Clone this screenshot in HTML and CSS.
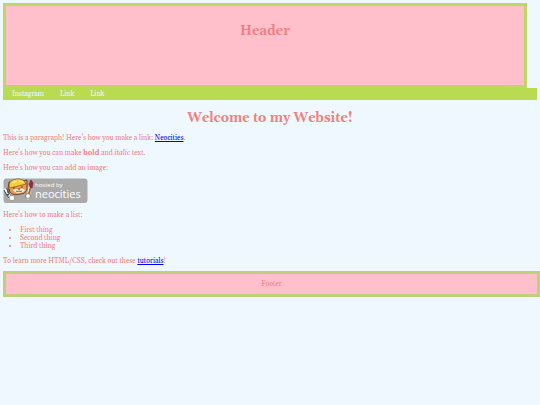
FILE: index.html
```html
<!DOCTYPE html>
<html lang="en">
<head>
<meta charset="utf-8">
<title>My Website</title>
<link rel="stylesheet" href="styles.css">
</head>
<body>
<header class="header"><h1 class="title">Header</h1></header>
<nav class="nav">
<a href="#instagram">Instagram</a>
<a href="#link-one">Link</a>
<a href="#link-two">Link</a>
</nav>
<main class="content">
<h1 class="title">Welcome to my Website!</h1>
<p>This is a paragraph! Here's how you make a link: <a href="#neocities">Neocities</a>.</p>
<p>Here's how you can make <strong>bold</strong> and <em>italic</em> text.</p>
<p>Here's how you can add an image:</p>
<svg class="badge" viewBox="0 0 85 26" role="img" aria-label="Hosted by Neocities">
<rect x="0.5" y="0.5" width="84" height="24.5" rx="3" fill="#a9a9a9"/>
<g stroke="#fff" stroke-width="3" stroke-linecap="round" fill="none"><path d="M2 12l5 8M25 20l3-15"/></g>
<path d="M6 4l4 0q5-3 10-1l4-1 0 6q1 7-6 8-8 2-11-2-3-4-1-10z" fill="#ef9848" stroke="#4b3427" stroke-width=".8"/>
<path d="M6 8q0-6 7-7 8-1 10 5l-4 1-12 3z" fill="#f7ce43" stroke="#75502a" stroke-width=".7"/>
<path d="M9 5l5-2M16 3l4 1" stroke="#fff0a0" stroke-width="1"/>
<path d="M10 12q3-2 6 0 3-3 6 0-2 3-6 3-4 0-6-3z" fill="#fff2df"/>
<path d="M11 9v2M19 8v2M15 11h2M13 13q2 1 3 0 1 1 3 0" fill="none" stroke="#45332e" stroke-width=".8"/>
<path d="M1 12l2 4 3 1M4 10l1 5M3 16l3 4M6 11l0 5-2 1" fill="none" stroke="#4b4e55" stroke-width="1.1"/>
<path d="M25 19l3-11" stroke="#9c652f" stroke-width="1.8"/>
<path d="M27 9l-1-3 2-4 2 3-1 5z" fill="#b51f34" stroke="#593039" stroke-width=".7"/>
<circle cx="9" cy="20" r="2.8" fill="#fff7e9" stroke="#77736f" stroke-width=".6"/>
<circle cx="25" cy="18" r="2.5" fill="#fff7e9" stroke="#5c4435" stroke-width=".6"/>
<text class="badge-small" x="32" y="9" fill="#fff">hosted by</text>
<text class="badge-name" x="32" y="20" fill="#fff">neocities</text>
</svg>
<p>Here's how to make a list:</p>
<ul><li>First thing</li><li>Second thing</li><li>Third thing</li></ul>
<p>To learn more HTML/CSS, check out these <a href="#tutorials">tutorials</a>!</p>
</main>
<footer class="footer">Footer</footer>
</body>
</html>
```
FILE: styles.css
```css
* { box-sizing: border-box; }
body {
  margin: 3px 0 0 3px;
  background: #f0f8ff;
  color: #f08080;
  font: 7px/8px Georgia, Gelasio, "Liberation Serif", serif;
}
.header {
  height: 85px;
  margin-right: 13px;
  padding-top: 17px;
  border: 3px solid #bdd762;
  background: #ffc0cb;
}
.title {
  margin: 0;
  font-size: 13px;
  line-height: 16px;
  text-align: center;
}
.nav {
  display: flex;
  gap: 16px;
  margin-right: 3px;
  padding: 2px 9px;
  background: #b9db52;
}
.nav a { color: #f0f8ff; text-decoration: none; }
.content { padding: 10px 3px 6px 0; }
.content .title { margin-bottom: 8px; }
.content a { color: #0000ee; }
p { margin: 0 0 7px; }
.badge {
  display: block;
  width: 85px;
  height: 26px;
  margin: -1px 0 7px;
}
.badge-small { font: 6px "Open Sans", sans-serif; }
.badge-name { font: 11px "Open Sans", sans-serif; }
ul { margin: 0 0 7px; padding-left: 17px; }
.content p:last-child { margin-bottom: 0; }
.footer {
  padding: 6px;
  border: 3px solid #c0cf7d;
  background: #ffc0cb;
  text-align: center;
}
```
